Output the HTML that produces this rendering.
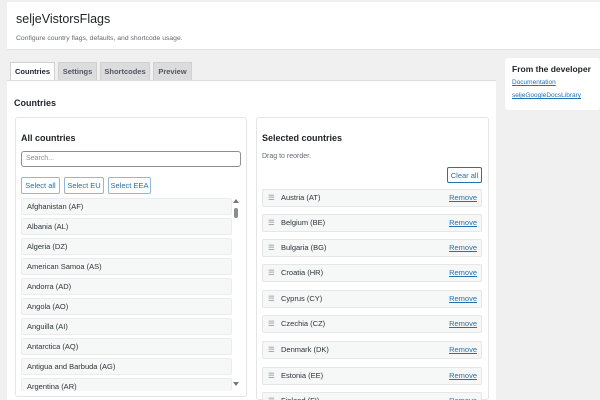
<!DOCTYPE html>
<html style="overflow:hidden;width:600px;height:400px"><head><style>
*{box-sizing:border-box;margin:0;padding:0}
body{width:600px;height:400px;overflow:hidden;background:#f0f0f1;font-family:"Liberation Sans",sans-serif;color:#1d2327;position:relative}
.a{position:absolute}
.hdr{left:7px;top:2px;width:593px;height:48px;background:#fff;border-bottom:1px solid #e2e2e2}
.tab{top:62px;height:19px;font-size:7.5px;font-weight:bold;color:#50575e;background:#dcdcde;border:1px solid #d0d0d0;border-bottom:none;text-align:center;line-height:18px}
.main{left:7px;top:80px;width:489px;height:320px;background:#fff;border-top:1px solid #dcdcde}
.card{background:#fff;border:1px solid #e4e4e4;border-radius:3px}
.btn{height:17px;border:1px solid #8fb8da;border-radius:2px;color:#2271b1;font-size:7.5px;line-height:15px;text-align:center;background:#fff}
.li{left:21px;width:211px;height:17px;background:#f6f7f7;border:1px solid #ececec;border-radius:2px;font-size:7.5px;line-height:15px;padding-left:5px;color:#2c3338}
.ri{left:262px;width:220px;height:18px;background:#f6f7f7;border:1px solid #e6e6e6;border-radius:2px;font-size:7.5px;line-height:16px;color:#2c3338}
.ri .h{position:absolute;left:5px;color:#8c8f94}
.ri .n{position:absolute;left:18px}
.ri .r{position:absolute;right:4px;color:#2271b1;text-decoration:underline}
</style></head><body>
<div class="a hdr"></div>
<div class="a" style="left:16px;top:12px;font-size:12.5px;color:#1d2327">seljeVistorsFlags</div>
<div class="a" style="left:16px;top:35px;font-size:6.8px;color:#646970">Configure country flags, defaults, and shortcode usage.</div>
<div class="a tab" style="left:10px;width:45px;background:#fff;color:#1d2327;height:20px">Countries</div>
<div class="a tab" style="left:58px;width:39px">Settings</div>
<div class="a tab" style="left:100px;width:50px">Shortcodes</div>
<div class="a tab" style="left:153px;width:39px">Preview</div>
<div class="a main"></div>
<div class="a" style="left:14px;top:98px;font-size:9px;font-weight:bold">Countries</div>
<div class="a card" style="left:15px;top:117px;width:232px;height:280px"></div>
<div class="a card" style="left:256px;top:117px;width:233px;height:283px"></div>
<div class="a" style="left:21px;top:133px;font-size:9px;font-weight:bold">All countries</div>
<div class="a" style="left:21px;top:151px;width:220px;height:16px;border:1px solid #8c8f94;border-radius:3px;font-size:7px;color:#8c8f94;line-height:14px;padding-left:4px">Search...</div>
<div class="a btn" style="left:21px;top:177px;width:39px">Select all</div>
<div class="a btn" style="left:64px;top:177px;width:40px">Select EU</div>
<div class="a btn" style="left:108px;top:177px;width:43px">Select EEA</div>
<div class="a li" style="top:198px">Afghanistan (AF)</div>
<div class="a li" style="top:218px">Albania (AL)</div>
<div class="a li" style="top:238px">Algeria (DZ)</div>
<div class="a li" style="top:258px">American Samoa (AS)</div>
<div class="a li" style="top:278px">Andorra (AD)</div>
<div class="a li" style="top:298px">Angola (AO)</div>
<div class="a li" style="top:318px">Anguilla (AI)</div>
<div class="a li" style="top:338px">Antarctica (AQ)</div>
<div class="a li" style="top:358px">Antigua and Barbuda (AG)</div>
<div class="a li" style="top:378px;height:13px;overflow:hidden;border-bottom:none">Argentina (AR)</div>
<div class="a" style="left:233px;top:199px;width:0;height:0;border-left:3px solid transparent;border-right:3px solid transparent;border-bottom:4px solid #777"></div>
<div class="a" style="left:234px;top:208px;width:4px;height:10px;background:#8c8c8c;border-radius:2px"></div>
<div class="a" style="left:233px;top:382px;width:0;height:0;border-left:3px solid transparent;border-right:3px solid transparent;border-top:4px solid #777"></div>
<div class="a" style="left:262px;top:133px;font-size:9px;font-weight:bold">Selected countries</div>
<div class="a" style="left:262px;top:153px;font-size:7px;color:#646970">Drag to reorder.</div>
<div class="a btn" style="left:447px;top:167px;width:35px;height:16px;border-color:#2271b1">Clear all</div>
<div class="a ri" style="top:189px"><span class="h">☰</span><span class="n">Austria (AT)</span><span class="r">Remove</span></div>
<div class="a ri" style="top:214px"><span class="h">☰</span><span class="n">Belgium (BE)</span><span class="r">Remove</span></div>
<div class="a ri" style="top:239px"><span class="h">☰</span><span class="n">Bulgaria (BG)</span><span class="r">Remove</span></div>
<div class="a ri" style="top:264px"><span class="h">☰</span><span class="n">Croatia (HR)</span><span class="r">Remove</span></div>
<div class="a ri" style="top:290px"><span class="h">☰</span><span class="n">Cyprus (CY)</span><span class="r">Remove</span></div>
<div class="a ri" style="top:315px"><span class="h">☰</span><span class="n">Czechia (CZ)</span><span class="r">Remove</span></div>
<div class="a ri" style="top:341px"><span class="h">☰</span><span class="n">Denmark (DK)</span><span class="r">Remove</span></div>
<div class="a ri" style="top:367px"><span class="h">☰</span><span class="n">Estonia (EE)</span><span class="r">Remove</span></div>
<div class="a ri" style="top:392px;height:8px;overflow:hidden;border-bottom:none"><span class="h">☰</span><span class="n">Finland (FI)</span><span class="r">Remove</span></div>
<div class="a card" style="left:505px;top:58px;width:95px;height:52px;border:none"></div>
<div class="a" style="left:512px;top:64px;font-size:8.5px;font-weight:bold">From the developer</div>
<div class="a" style="left:512px;top:79px;font-size:6.5px;color:#2271b1;text-decoration:underline">Documentation</div>
<div class="a" style="left:512px;top:92px;font-size:6.5px;color:#2271b1;text-decoration:underline">seljeGoogleDocsLibrary</div>
</body></html>
